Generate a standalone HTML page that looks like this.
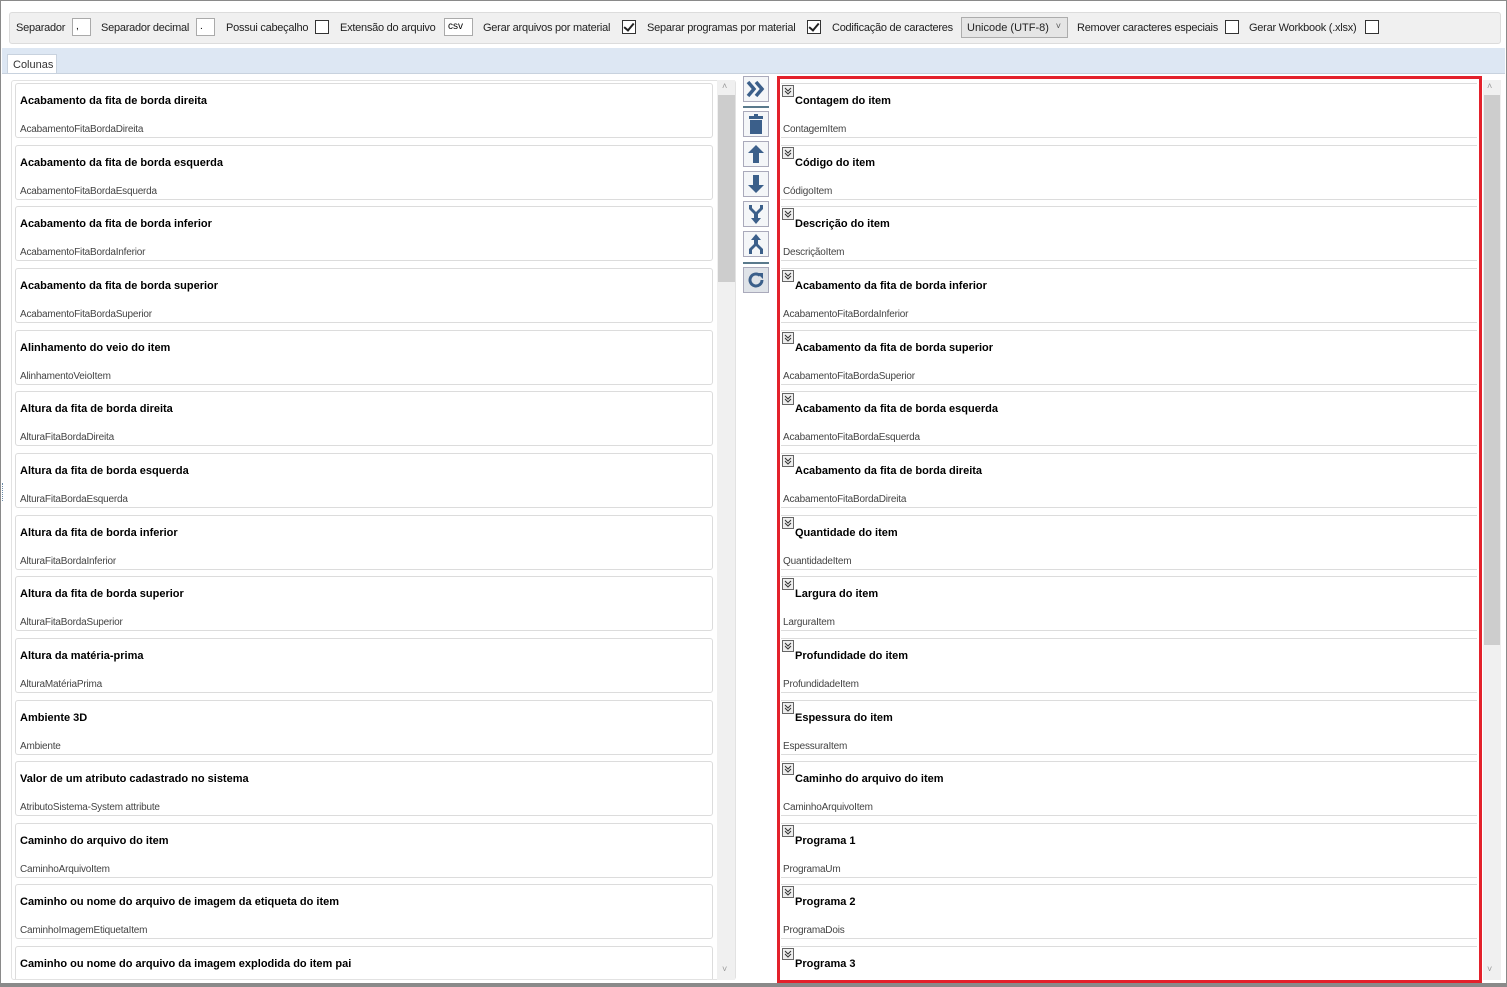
<!DOCTYPE html>
<html><head><meta charset="utf-8"><style>
*{box-sizing:border-box;margin:0;padding:0}
body{width:1507px;height:987px;overflow:hidden;background:#fff;font-family:"Liberation Sans",sans-serif;font-size:11px;color:#000;position:relative}
.a{position:absolute}
.frame{left:0;top:0;width:1507px;height:987px;border:1px solid #8a8a8a;border-bottom:4px solid #8a8a8a}
.tb{left:9px;top:12px;width:1492px;height:32px;background:#f0f0f0;border:1px solid #dcdcdc;border-radius:3px}
.lbl{top:22px;font-size:11px;color:#222;white-space:nowrap;letter-spacing:-0.25px}
.inp{top:18px;height:18px;background:#fff;border:1px solid #aaa;font-size:10px;padding-left:3px;line-height:16px}
.cb{top:20px;width:14px;height:14px;background:#fff;border:1px solid #333}
.cb.on::after{content:"";position:absolute;left:3px;top:0px;width:4px;height:8px;border:solid #222;border-width:0 2px 2px 0;transform:rotate(40deg)}
.tabs{left:2px;top:48px;width:1503px;height:25px;background:#dde7f3}
.tab{left:7px;top:54px;width:50px;height:20px;background:#fff;border:1px solid #c8d2de;border-bottom:none;font-size:11px;color:#333;padding:4px 0 0 5px}
.card{left:15px;width:698px;height:55px;border:1px solid #dcdcdc;border-radius:3px;background:#fff}
.t{position:absolute;left:4px;top:11px;font-weight:bold;font-size:11px;white-space:nowrap}
.s{position:absolute;left:4px;top:40px;font-size:10px;color:#444;white-space:nowrap;letter-spacing:-.2px}
.rc{left:781px;width:696px;height:55px;border-top:1px solid #dcdcdc;border-bottom:1px solid #dcdcdc;background:#fff}
.rc .t{left:14px;top:11px}
.rc .s{left:2px;top:40px}
.ck{position:absolute;left:1px;top:1px;width:12px;height:12px;border:1px solid #666;background:#eee}
.ck svg{display:block}
.sb{width:18px;background:#f0f0f0}
.th{background:#cdcdcd}
.btn{left:743px;width:26px;height:26px;border:1px solid #aab;background:#f4f6f8}
.sep{left:743px;width:26px;height:2px;background:#5a7a8c}
.red{left:777px;top:76px;width:705px;height:907px;border:3px solid #e3212b}
</style></head><body>
<div class="a frame"></div>
<div class="a tb"></div>
<span class="a lbl" style="left:16px">Separador</span><div class="a inp" style="left:72px;width:19px">,</div>
<span class="a lbl" style="left:101px">Separador decimal</span><div class="a inp" style="left:196px;width:19px">.</div>
<span class="a lbl" style="left:226px">Possui cabeçalho</span><div class="a cb" style="left:315px"></div>
<span class="a lbl" style="left:340px">Extensão do arquivo</span><div class="a inp" style="left:444px;width:29px">csv</div>
<span class="a lbl" style="left:483px">Gerar arquivos por material</span><div class="a cb on" style="left:622px"></div>
<span class="a lbl" style="left:647px">Separar programas por material</span><div class="a cb on" style="left:807px"></div>
<span class="a lbl" style="left:832px">Codificação de caracteres</span>
<div class="a" style="left:961px;top:17px;width:107px;height:21px;border:1px solid #acacac;background:#e5e5e5;font-size:11px;padding:4px 0 0 5px;color:#222">Unicode (UTF-8)<span style="position:absolute;right:6px;top:3px;font-size:9px;color:#555">˅</span></div>
<span class="a lbl" style="left:1077px">Remover caracteres especiais</span><div class="a cb" style="left:1225px"></div>
<span class="a lbl" style="left:1249px">Gerar Workbook (.xlsx)</span><div class="a cb" style="left:1365px"></div>
<div class="a tabs"></div>
<div class="a tab">Colunas</div>
<div class="a" style="left:2px;top:73px;width:1503px;height:1px;background:#c8d2de"></div>
<div class="a" style="left:2px;top:483px;width:2px;height:18px;border-left:1px dotted #6a8aa8"></div>

<div class="a" style="left:11px;top:80px;width:725px;height:900px;border:1px solid #e2e2e2;border-radius:3px"></div>
<div class="a card" style="top:83px"><span class="t">Acabamento da fita de borda direita</span><span class="s">AcabamentoFitaBordaDireita</span></div>
<div class="a card" style="top:145px"><span class="t">Acabamento da fita de borda esquerda</span><span class="s">AcabamentoFitaBordaEsquerda</span></div>
<div class="a card" style="top:206px"><span class="t">Acabamento da fita de borda inferior</span><span class="s">AcabamentoFitaBordaInferior</span></div>
<div class="a card" style="top:268px"><span class="t">Acabamento da fita de borda superior</span><span class="s">AcabamentoFitaBordaSuperior</span></div>
<div class="a card" style="top:330px"><span class="t">Alinhamento do veio do item</span><span class="s">AlinhamentoVeioItem</span></div>
<div class="a card" style="top:391px"><span class="t">Altura da fita de borda direita</span><span class="s">AlturaFitaBordaDireita</span></div>
<div class="a card" style="top:453px"><span class="t">Altura da fita de borda esquerda</span><span class="s">AlturaFitaBordaEsquerda</span></div>
<div class="a card" style="top:515px"><span class="t">Altura da fita de borda inferior</span><span class="s">AlturaFitaBordaInferior</span></div>
<div class="a card" style="top:576px"><span class="t">Altura da fita de borda superior</span><span class="s">AlturaFitaBordaSuperior</span></div>
<div class="a card" style="top:638px"><span class="t">Altura da matéria-prima</span><span class="s">AlturaMatériaPrima</span></div>
<div class="a card" style="top:700px"><span class="t">Ambiente 3D</span><span class="s">Ambiente</span></div>
<div class="a card" style="top:761px"><span class="t">Valor de um atributo cadastrado no sistema</span><span class="s">AtributoSistema-System attribute</span></div>
<div class="a card" style="top:823px"><span class="t">Caminho do arquivo do item</span><span class="s">CaminhoArquivoItem</span></div>
<div class="a card" style="top:884px"><span class="t">Caminho ou nome do arquivo de imagem da etiqueta do item</span><span class="s">CaminhoImagemEtiquetaItem</span></div>
<div class="a card" style="top:946px;height:33px;border-bottom:none;border-radius:3px 3px 0 0"><span class="t">Caminho ou nome do arquivo da imagem explodida do item pai</span></div>
<div class="a sb" style="left:717px;top:80px;height:900px"></div>
<div class="a th" style="left:718px;top:95px;width:17px;height:187px"></div>
<span class="a" style="left:722px;top:81px;font-size:9px;color:#999">˄</span>
<span class="a" style="left:722px;top:964px;font-size:9px;color:#999">˅</span>

<div class="a btn" style="top:76px"><svg width="24" height="24"><path d="M4 5l6 7-6 7M12 5l6 7-6 7" stroke="#3b5f8a" stroke-width="3.5" fill="none"/></svg></div>
<div class="a sep" style="top:106px"></div>
<div class="a btn" style="top:111px"><svg width="24" height="24"><rect x="5" y="4" width="14" height="3" fill="#3b5f8a"/><rect x="10" y="2" width="4" height="2" fill="#3b5f8a"/><rect x="6" y="8" width="12" height="14" fill="#3b5f8a"/></svg></div>
<div class="a btn" style="top:141px"><svg width="24" height="24"><path d="M12 3l8 8h-5v10h-6V11H4z" fill="#3b5f8a"/></svg></div>
<div class="a btn" style="top:171px"><svg width="24" height="24"><path d="M12 21l8-8h-5V3h-6v10H4z" fill="#3b5f8a"/></svg></div>
<div class="a btn" style="top:201px"><svg width="24" height="24"><path d="M5 3v4l5 5v4H7l5 6 5-6h-3v-4l5-5V3h-3v3l-4 4-4-4V3z" fill="#3b5f8a"/></svg></div>
<div class="a btn" style="top:231px"><svg width="24" height="24"><path d="M12 2l-5 6h3v4l-5 5v5h3v-4l4-4 4 4v4h3v-5l-5-5V8h3z" fill="#3b5f8a"/></svg></div>
<div class="a sep" style="top:262px"></div>
<div class="a btn" style="top:267px;background:#dfe3e8"><svg width="24" height="24"><path d="M18 12a6 6 0 1 1-2-4.5" stroke="#3b5f8a" stroke-width="3" fill="none"/><path d="M13 5h6v6z" fill="#3b5f8a"/></svg></div>

<div class="a rc" style="top:83px"><span class="ck"><svg width="10" height="10"><path d="M2 2l3 3 3-3M2 5l3 3 3-3" stroke="#333" fill="none"/></svg></span><span class="t">Contagem do item</span><span class="s">ContagemItem</span></div>
<div class="a rc" style="top:145px"><span class="ck"><svg width="10" height="10"><path d="M2 2l3 3 3-3M2 5l3 3 3-3" stroke="#333" fill="none"/></svg></span><span class="t">Código do item</span><span class="s">CódigoItem</span></div>
<div class="a rc" style="top:206px"><span class="ck"><svg width="10" height="10"><path d="M2 2l3 3 3-3M2 5l3 3 3-3" stroke="#333" fill="none"/></svg></span><span class="t">Descrição do item</span><span class="s">DescriçãoItem</span></div>
<div class="a rc" style="top:268px"><span class="ck"><svg width="10" height="10"><path d="M2 2l3 3 3-3M2 5l3 3 3-3" stroke="#333" fill="none"/></svg></span><span class="t">Acabamento da fita de borda inferior</span><span class="s">AcabamentoFitaBordaInferior</span></div>
<div class="a rc" style="top:330px"><span class="ck"><svg width="10" height="10"><path d="M2 2l3 3 3-3M2 5l3 3 3-3" stroke="#333" fill="none"/></svg></span><span class="t">Acabamento da fita de borda superior</span><span class="s">AcabamentoFitaBordaSuperior</span></div>
<div class="a rc" style="top:391px"><span class="ck"><svg width="10" height="10"><path d="M2 2l3 3 3-3M2 5l3 3 3-3" stroke="#333" fill="none"/></svg></span><span class="t">Acabamento da fita de borda esquerda</span><span class="s">AcabamentoFitaBordaEsquerda</span></div>
<div class="a rc" style="top:453px"><span class="ck"><svg width="10" height="10"><path d="M2 2l3 3 3-3M2 5l3 3 3-3" stroke="#333" fill="none"/></svg></span><span class="t">Acabamento da fita de borda direita</span><span class="s">AcabamentoFitaBordaDireita</span></div>
<div class="a rc" style="top:515px"><span class="ck"><svg width="10" height="10"><path d="M2 2l3 3 3-3M2 5l3 3 3-3" stroke="#333" fill="none"/></svg></span><span class="t">Quantidade do item</span><span class="s">QuantidadeItem</span></div>
<div class="a rc" style="top:576px"><span class="ck"><svg width="10" height="10"><path d="M2 2l3 3 3-3M2 5l3 3 3-3" stroke="#333" fill="none"/></svg></span><span class="t">Largura do item</span><span class="s">LarguraItem</span></div>
<div class="a rc" style="top:638px"><span class="ck"><svg width="10" height="10"><path d="M2 2l3 3 3-3M2 5l3 3 3-3" stroke="#333" fill="none"/></svg></span><span class="t">Profundidade do item</span><span class="s">ProfundidadeItem</span></div>
<div class="a rc" style="top:700px"><span class="ck"><svg width="10" height="10"><path d="M2 2l3 3 3-3M2 5l3 3 3-3" stroke="#333" fill="none"/></svg></span><span class="t">Espessura do item</span><span class="s">EspessuraItem</span></div>
<div class="a rc" style="top:761px"><span class="ck"><svg width="10" height="10"><path d="M2 2l3 3 3-3M2 5l3 3 3-3" stroke="#333" fill="none"/></svg></span><span class="t">Caminho do arquivo do item</span><span class="s">CaminhoArquivoItem</span></div>
<div class="a rc" style="top:823px"><span class="ck"><svg width="10" height="10"><path d="M2 2l3 3 3-3M2 5l3 3 3-3" stroke="#333" fill="none"/></svg></span><span class="t">Programa 1</span><span class="s">ProgramaUm</span></div>
<div class="a rc" style="top:884px"><span class="ck"><svg width="10" height="10"><path d="M2 2l3 3 3-3M2 5l3 3 3-3" stroke="#333" fill="none"/></svg></span><span class="t">Programa 2</span><span class="s">ProgramaDois</span></div>
<div class="a rc" style="top:946px;height:34px;border-bottom:none"><span class="ck"><svg width="10" height="10"><path d="M2 2l3 3 3-3M2 5l3 3 3-3" stroke="#333" fill="none"/></svg></span><span class="t">Programa 3</span></div>
<div class="a red"></div>
<div class="a sb" style="left:1483px;top:80px;height:900px"></div>
<div class="a th" style="left:1484px;top:95px;width:16px;height:550px"></div>
<span class="a" style="left:1487px;top:81px;font-size:9px;color:#999">˄</span>
<span class="a" style="left:1487px;top:964px;font-size:9px;color:#999">˅</span>
</body></html>
